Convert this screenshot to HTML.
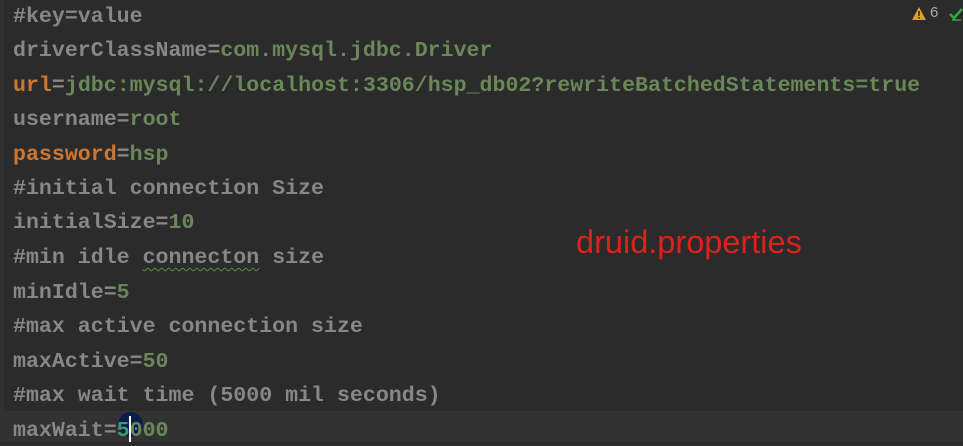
<!DOCTYPE html>
<html><head><meta charset="utf-8"><style>
html,body{margin:0;padding:0}
body{width:963px;height:442px;background:#2b2b2b;overflow:hidden;position:relative;font-family:"Liberation Mono",monospace}
.l{position:absolute;left:13px;font-size:21.6px;font-weight:bold;color:#878787;white-space:pre;line-height:30px;height:30px;z-index:2}
.g{color:#6a8759}.o{color:#cc7832}
.sq{text-decoration:underline wavy #5c8a3a;text-underline-offset:4px;text-decoration-thickness:1px}
</style></head><body>
<div style="position:absolute;left:0;top:0;width:4px;height:442px;background:#313131"></div>
<div style="position:absolute;left:0;top:411px;width:963px;height:31px;background:#323232"></div>
<div style="position:absolute;left:118px;top:412px;width:25px;height:25px;border-radius:50%;background:#0b1f4a;z-index:1"></div>
<div class="l" style="top:2px">#key=value</div>
<div class="l" style="top:36px">driverClassName=<span class="g">com.mysql.jdbc.Driver</span></div>
<div class="l" style="top:71px"><span class="o">url</span>=<span class="g">jdbc:mysql://localhost:3306/hsp_db02?rewriteBatchedStatements=true</span></div>
<div class="l" style="top:105px">username=<span class="g">root</span></div>
<div class="l" style="top:140px"><span class="o">password</span>=<span class="g">hsp</span></div>
<div class="l" style="top:174px">#initial connection Size</div>
<div class="l" style="top:208px">initialSize=<span class="g">10</span></div>
<div class="l" style="top:243px">#min idle <span class="sq">connecton</span> size</div>
<div class="l" style="top:278px">minIdle=<span class="g">5</span></div>
<div class="l" style="top:312px">#max active connection size</div>
<div class="l" style="top:347px">maxActive=<span class="g">50</span></div>
<div class="l" style="top:381px">#max wait time (5000 mil seconds)</div>
<div class="l" style="top:416px">maxWait=<span class="g"><span style="color:#3d9a6a">5</span>000</span></div>
<div style="position:absolute;left:129px;top:416px;width:2px;height:26px;background:#fff;z-index:3"></div>
<div style="position:absolute;left:576px;top:224px;font-family:'Liberation Sans',sans-serif;font-size:32.5px;color:#e0201c">druid.properties</div>
<svg style="position:absolute;left:912px;top:7px" width="14" height="13"><polygon points="7,0 14,13 0,13" fill="#d9a521"/><rect x="6.2" y="4" width="1.6" height="5" fill="#2b2b2b"/><rect x="6.2" y="10" width="1.6" height="1.6" fill="#2b2b2b"/></svg>
<div style="position:absolute;left:930px;top:4px;font-family:'Liberation Sans',sans-serif;font-size:15px;color:#aaa">6</div>
<svg style="position:absolute;left:949px;top:7px" width="14" height="14"><path d="M1,7 L5,11 L13,2" stroke="#3ca63c" stroke-width="2.5" fill="none"/><path d="M3,13 L12,13" stroke="#3ca63c" stroke-width="1.5"/></svg>
</body></html>
